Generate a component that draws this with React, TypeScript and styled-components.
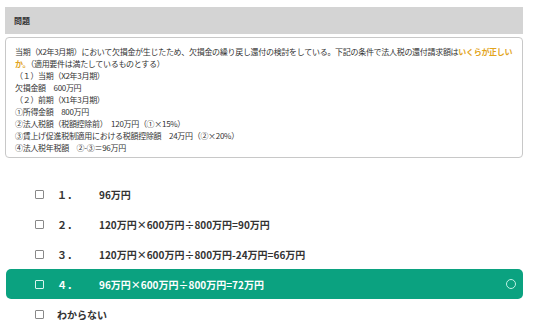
import styled, { createGlobalStyle } from "styled-components";

const GlobalStyle = createGlobalStyle`
  body {
    margin: 0;
    background: #fff;
    font-family: "Noto Sans CJK JP", "Noto Sans", sans-serif;
    color: #333;
  }
`;

type Choice = { no: string; text: string };

const CHOICES: Choice[] = [
  { no: "１．", text: "96万円" },
  { no: "２．", text: "120万円×600万円÷800万円=90万円" },
  { no: "３．", text: "120万円×600万円÷800万円-24万円=66万円" },
  { no: "４．", text: "96万円×600万円÷800万円=72万円" },
];

const SELECTED = 3;

function App() {
  return (
    <>
      <GlobalStyle />
      <Page>
        <Header>問題</Header>
        <Question>
          当期（X2年3月期）において欠損金が生じたため、欠損金の繰り戻し還付の検討をしている。下記の条件で法人税の還付請求額は
          <Highlight>いくらが正しい</Highlight>
          <Highlight>か。</Highlight>（適用要件は満たしているものとする）
          <br />（１）当期（X2年3月期）
          <br />欠損金額　600万円
          <br />（２）前期（X1年3月期）
          <br />①所得金額　800万円
          <br />②法人税額（税額控除前）　120万円（①×15%）
          <br />③賃上げ促進税制適用における税額控除額　24万円（②×20%）
          <br />④法人税年税額　②-③＝96万円
        </Question>

        <ChoiceList>
          {CHOICES.map((c, i) => (
            <ChoiceRow key={c.no} $active={i === SELECTED}>
              <CheckBox $active={i === SELECTED} />
              <ChoiceNo>{c.no}</ChoiceNo>
              <ChoiceText>{c.text}</ChoiceText>
              {i === SELECTED && <Ring />}
            </ChoiceRow>
          ))}
          <ChoiceRow $active={false}>
            <CheckBox $active={false} />
            <ChoiceText>わからない</ChoiceText>
          </ChoiceRow>
        </ChoiceList>
      </Page>
    </>
  );
}
export default App;

const Page = styled.div`
  padding: 7px 13px 0 5px;
`;

const Header = styled.div`
  height: 27px;
  background: #d4d4d4;
  display: flex;
  align-items: center;
  padding-left: 9px;
  font-size: 8px;
  font-weight: 700;
  color: #333;
`;

const Question = styled.div`
  margin-top: 3px;
  border: 1px solid #c8c8c8;
  border-radius: 4px;
  padding: 8px 6px 3px 9px;
  font-size: 8px;
  line-height: 12px;
  letter-spacing: -0.3px;
  color: #333;
`;

const Highlight = styled.span`
  color: #e2a41c;
  font-weight: 700;
`;

const ChoiceList = styled.div`
  margin-top: 21px;
  display: flex;
  flex-direction: column;
`;

const ChoiceRow = styled.div<{ $active: boolean }>`
  height: 30px;
  margin-left: 1px;
  display: flex;
  align-items: center;
  padding-left: 29px;
  border-radius: 5px;
  background: ${(p) => (p.$active ? "#0ba280" : "transparent")};
  color: ${(p) => (p.$active ? "#fff" : "#333")};
  font-size: 10px;
  font-weight: 600;
`;

const CheckBox = styled.span<{ $active: boolean }>`
  width: 7px;
  height: 7px;
  border: 1px solid ${(p) => (p.$active ? "#d8f5ee" : "#888")};
  border-radius: 1px;
  margin-right: 13px;
  flex-shrink: 0;
`;

const ChoiceNo = styled.span`
  width: 42px;
  flex-shrink: 0;
  font-weight: 700;
`;

const ChoiceText = styled.span`
  white-space: nowrap;
`;

const Ring = styled.span`
  margin-left: auto;
  margin-right: 7px;
  width: 8px;
  height: 8px;
  border: 1px solid #bff2e4;
  border-radius: 50%;
`;
